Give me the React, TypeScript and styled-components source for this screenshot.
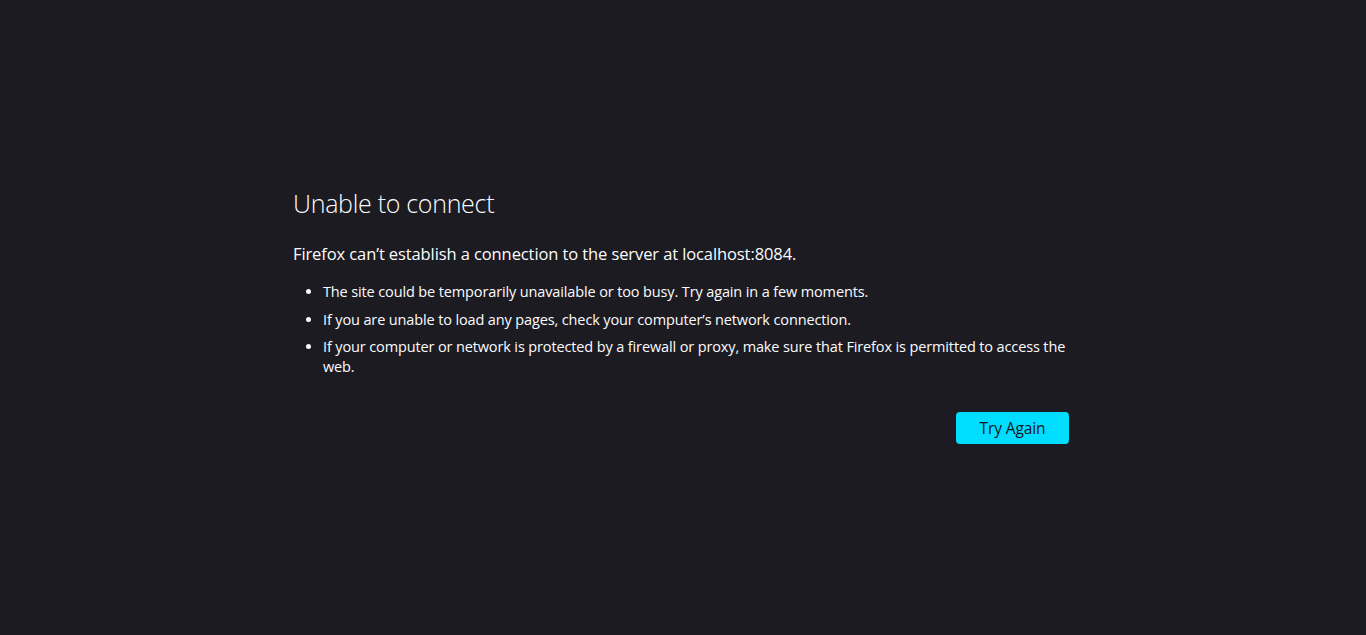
import React from "react";
import styled, { createGlobalStyle } from "styled-components";

const Global = createGlobalStyle`
  html, body { margin: 0; padding: 0; background: #1c1b22; }
  body { font-family: "Open Sans", "Noto Sans", sans-serif; color: #fbfbfe; }
`;

const Page = styled.main`
  min-height: 635px;
  display: flex;
  justify-content: center;
  padding: 184px 4px 0 0;
  box-sizing: border-box;
`;

const Container = styled.div`
  width: 776px;
  display: flex;
  flex-direction: column;
`;

const Title = styled.h1`
  margin: 0;
  font-size: 25px;
  font-weight: 300;
  line-height: 38px;
  letter-spacing: -0.3px;
`;

const Subtitle = styled.p`
  margin: 20px 0 0;
  font-size: 16.5px;
  line-height: 24px;
  font-weight: 400;
  letter-spacing: -0.1px;
`;

const List = styled.ul`
  margin: 16px 0 0;
  padding: 0 0 0 30px;
  list-style: disc;
  font-size: 14.5px;
  line-height: 20px;
  letter-spacing: -0.13px;
`;

const Item = styled.li`
  margin-bottom: 7.5px;
  padding-left: 0;
`;

const Actions = styled.div`
  display: flex;
  justify-content: flex-end;
  margin-top: 27px;
`;

const Button = styled.button`
  height: 32px;
  width: 113px;
  border: none;
  border-radius: 4px;
  background: #00ddff;
  color: #15141a;
  font-family: inherit;
  font-size: 15.5px;
  font-weight: 500;
  letter-spacing: -0.1px;
  cursor: pointer;
`;

export default function App() {
  return (
    <>
      <Global />
      <Page>
        <Container>
          <Title>Unable to connect</Title>
          <Subtitle>Firefox can’t establish a connection to the server at localhost:8084.</Subtitle>
          <List>
            <Item>The site could be temporarily unavailable or too busy. Try again in a few moments.</Item>
            <Item>If you are unable to load any pages, check your computer’s network connection.</Item>
            <Item>If your computer or network is protected by a firewall or proxy, make sure that Firefox is permitted to access the web.</Item>
          </List>
          <Actions>
            <Button>Try Again</Button>
          </Actions>
        </Container>
      </Page>
    </>
  );
}
